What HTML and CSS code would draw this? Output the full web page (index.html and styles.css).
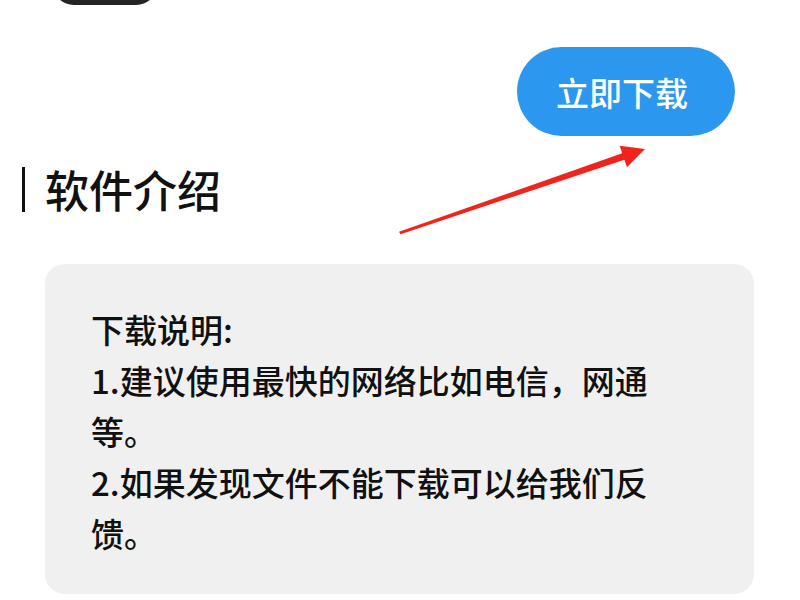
FILE: index.html
```html
<!DOCTYPE html>
<html lang="zh-CN">
<head>
<meta charset="utf-8">
<link rel="stylesheet" href="styles.css">
</head>
<body>
<div class="page">
  <div class="app-icon"></div>
  <div class="btn-row">
    <a class="download-btn">立即下载</a>
  </div>
  <div class="section-title">
    <span class="bar"></span>
    <h2 class="title-text">软件介绍</h2>
  </div>
  <div class="card">
    <div class="card-text">
      <p>下载说明:</p>
      <p>1.建议使用最快的网络比如电信，网通等。</p>
      <p>2.如果发现文件不能下载可以给我们反馈。</p>
    </div>
  </div>
  <svg class="annotation" width="800" height="600" viewBox="0 0 800 600">
    <polygon points="399,231.8 622.2,153.2 619.6,145.7 645,149 627,167.3 624.4,159.8 400.6,234.2" fill="#f0241c"/>
  </svg>
</div>
</body>
</html>
```

FILE: styles.css
```css
html, body {
  margin: 0;
  padding: 0;
  background: #ffffff;
}

body {
  font-family: "Noto Sans CJK SC", "Noto Sans", sans-serif;
  color: #111111;
  width: 800px;
  height: 600px;
  overflow: hidden;
}

.page {
  position: relative;
  display: flow-root;
  width: 800px;
  height: 600px;
}

.app-icon {
  width: 106px;
  height: 100px;
  margin-top: -95px;
  margin-left: 52px;
  background: #242424;
  border-radius: 22px;
}

.btn-row {
  display: flex;
  justify-content: flex-end;
  padding-right: 65px;
  margin-top: 42px;
}

.download-btn {
  display: flex;
  align-items: center;
  justify-content: center;
  width: 218px;
  height: 89px;
  padding-right: 8px;
  box-sizing: border-box;
  border-radius: 45px;
  background: #2c97ee;
  color: #ffffff;
  font-size: 33px;
  font-weight: 500;
}

.section-title {
  display: flex;
  align-items: center;
  margin-top: 31px;
  padding-left: 22px;
  gap: 20px;
}

.bar {
  width: 3px;
  height: 45px;
  background: #111111;
}

.title-text {
  margin: 0;
  font-size: 44px;
  line-height: 45px;
  font-weight: 500;
  color: #111111;
}

.card {
  margin: 52px 46px 0 45px;
  height: 330px;
  box-sizing: border-box;
  background: #f0f0f0;
  border-radius: 20px;
  padding: 40px 0 0 46px;
}

.card-text {
  width: 585px;
}

.card-text p {
  margin: 0;
  font-size: 33px;
  line-height: 51px;
  font-weight: 500;
  color: #111111;
}

.annotation {
  position: absolute;
  left: 0;
  top: 0;
  pointer-events: none;
}
```
